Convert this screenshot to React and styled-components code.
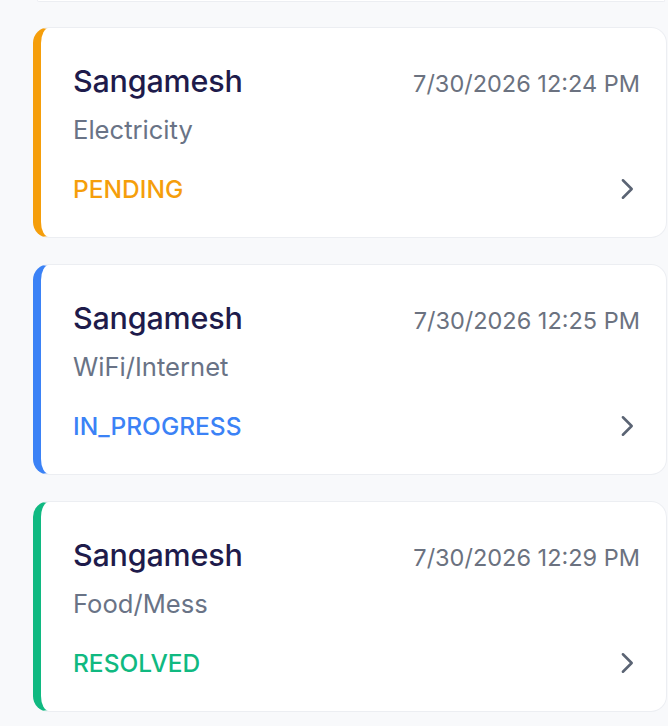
import React from "react";
import styled, { createGlobalStyle } from "styled-components";

const Global = createGlobalStyle`
  html, body {
    margin: 0;
    padding: 0;
    background: #f8f9fb;
    overflow: hidden;
  }
  body {
    font-family: Inter, "Noto Sans", "Liberation Sans", sans-serif;
    -webkit-font-smoothing: antialiased;
  }
`;

const Screen = styled.div`
  width: 668px;
  height: 726px;
  overflow: hidden;
  background: #f8f9fb;
`;

const List = styled.div`
  display: flex;
  flex-direction: column;
  gap: 26px;
  padding: 0 1px 0 33px;
`;

// bottom edge of the card scrolled out above
const CardTail = styled.div`
  height: 1px;
  margin: 0 2px -1px 4px;
  background: #ffffff;
  border: 1px solid #eceef2;
  border-top: none;
  border-radius: 0 0 16px 16px;
`;

const Card = styled.div`
  box-sizing: border-box;
  height: 211px;
  background: #ffffff;
  border: 1px solid #eceef2;
  border-left: 8px solid ${(p) => p.$accent};
  border-radius: 16px;
  padding: 33px 26px 0 32px;
  display: flex;
  flex-direction: column;
`;

const TopRow = styled.div`
  display: flex;
  justify-content: space-between;
  align-items: baseline;
`;

const Name = styled.div`
  font-size: 30.5px;
  font-weight: 500;
  color: #1e1b4b;
  line-height: 40px;
  letter-spacing: -0.2px;
`;

const Time = styled.div`
  font-size: 23.5px;
  color: #6b7280;
  line-height: 40px;
`;

const Category = styled.div`
  margin-top: 9px;
  font-size: 25.6px;
  color: #697386;
  line-height: 34px;
`;

const BottomRow = styled.div`
  margin-top: 25px;
  display: flex;
  justify-content: space-between;
  align-items: center;
`;

const Status = styled.div`
  font-size: 24.5px;
  font-weight: 500;
  color: ${(p) => p.$color};
  line-height: 34px;
`;

const Chevron = styled.svg`
  width: 28px;
  height: 28px;
  margin-right: -1px;
  color: #5b6474;
`;

const complaints = [
  { time: "7/30/2026 12:24 PM", category: "Electricity", status: "PENDING", color: "#f59e0b" },
  { time: "7/30/2026 12:25 PM", category: "WiFi/Internet", status: "IN_PROGRESS", color: "#3b82f6" },
  { time: "7/30/2026 12:29 PM", category: "Food/Mess", status: "RESOLVED", color: "#10b981" },
];

export default function App() {
  return (
    <Screen>
      <Global />
      <List>
        <CardTail />
        {complaints.map((c) => (
          <Card key={c.time} $accent={c.color}>
            <TopRow>
              <Name>Sangamesh</Name>
              <Time>{c.time}</Time>
            </TopRow>
            <Category>{c.category}</Category>
            <BottomRow>
              <Status $color={c.color}>{c.status}</Status>
              <Chevron viewBox="0 0 24 24" fill="none" stroke="currentColor" strokeWidth="2.2" strokeLinecap="round" strokeLinejoin="round">
                <path d="M8.5 4.5l7.5 7.5-7.5 7.5" />
              </Chevron>
            </BottomRow>
          </Card>
        ))}
      </List>
    </Screen>
  );
}
